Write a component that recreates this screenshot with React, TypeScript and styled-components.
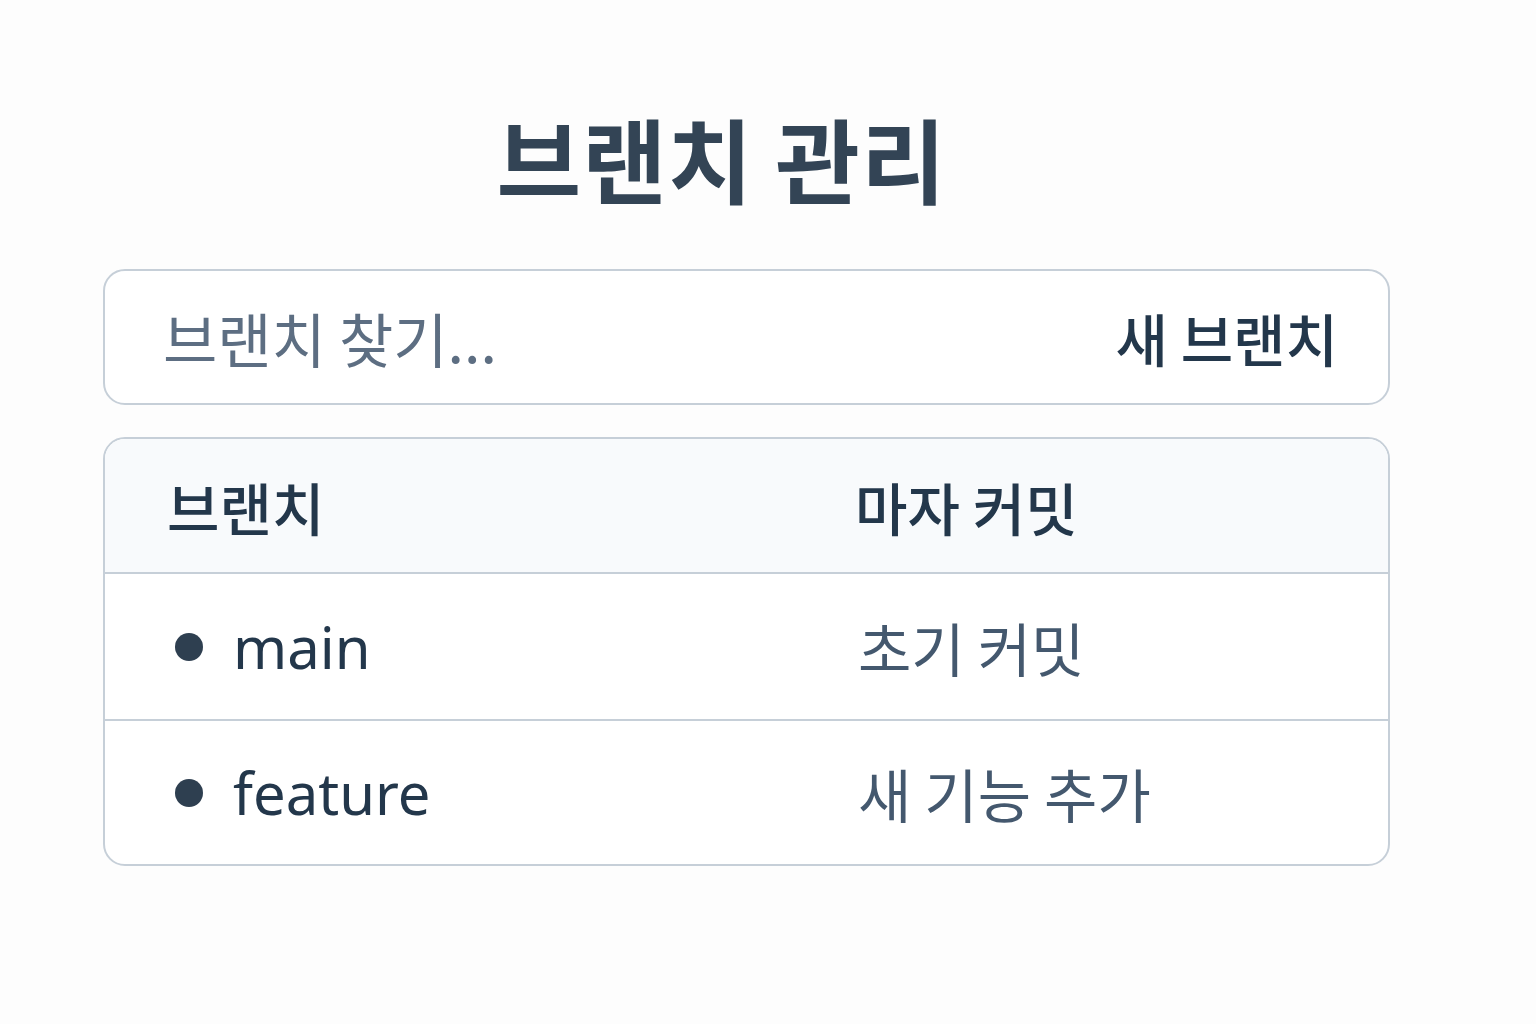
import React from "react";
import styled, { createGlobalStyle } from "styled-components";

interface Branch {
  name: string;
  lastCommit: string;
}

const BRANCHES: Branch[] = [
  { name: "main", lastCommit: "초기 커밋" },
  { name: "feature", lastCommit: "새 기능 추가" },
];

const GlobalStyle = createGlobalStyle`
  html, body {
    margin: 0;
    padding: 0;
    background: #fdfdfd;
  }
  body {
    font-family: "Noto Sans", "Noto Sans CJK KR", sans-serif;
    color: #2c3e50;
  }
`;

const App: React.FC = () => {
  return (
    <>
      <GlobalStyle />
      <SPage>
        <STitle>브랜치 관리</STitle>
        <SSearchBar>
          <SSearchInput placeholder="브랜치 찾기..." />
          <SNewButton type="button">새 브랜치</SNewButton>
        </SSearchBar>
        <STable>
          <SHeaderRow>
            <SHeaderCell>브랜치</SHeaderCell>
            <SHeaderCell>마자 커밋</SHeaderCell>
          </SHeaderRow>
          {BRANCHES.map((branch) => (
            <SRow key={branch.name}>
              <SBranchName>
                <SDot />
                {branch.name}
              </SBranchName>
              <SCommit>{branch.lastCommit}</SCommit>
            </SRow>
          ))}
        </STable>
      </SPage>
    </>
  );
};

const SPage = styled.div`
  width: 1287px;
  margin-left: 103px;
  padding-top: 99px;
  display: flex;
  flex-direction: column;
  gap: 32px;
`;

const STitle = styled.h1`
  margin: 0 0 22px;
  padding-right: 50px;
  text-align: center;
  font-family: "Noto Sans CJK KR", sans-serif;
  font-size: 92px;
  font-weight: 700;
  line-height: 116px;
  color: #334455;
  letter-spacing: 1px;
`;

const SSearchBar = styled.div`
  height: 136px;
  box-sizing: border-box;
  border: 2px solid #c6cfd8;
  border-radius: 22px;
  background: #ffffff;
  display: flex;
  align-items: center;
  justify-content: space-between;
  padding: 0 50px 0 56px;
`;

const SSearchInput = styled.input`
  flex: 1;
  border: none;
  outline: none;
  background: transparent;
  font-family: "Noto Sans CJK KR", sans-serif;
  font-size: 59px;
  font-weight: 400;
  color: #2c3e50;

  &::placeholder {
    color: #5d6e82;
  }
`;

const SNewButton = styled.button`
  border: none;
  background: transparent;
  padding: 0;
  font-family: "Noto Sans CJK KR", sans-serif;
  font-size: 57px;
  font-weight: 500;
  color: #23374b;
  cursor: pointer;
`;

const STable = styled.div`
  border: 2px solid #c6cfd8;
  border-radius: 22px;
  overflow: hidden;
  background: #ffffff;
`;

const SRowBase = styled.div`
  display: grid;
  grid-template-columns: 688px 1fr;
  align-items: center;
  box-sizing: border-box;
`;

const SHeaderRow = styled(SRowBase)`
  height: 135px;
  padding: 0 64px 0 62px;
  background: #f8fafc;
  border-bottom: 2px solid #c6cfd8;
`;

const SHeaderCell = styled.div`
  font-family: "Noto Sans CJK KR", sans-serif;
  font-size: 57px;
  font-weight: 500;
  color: #23374b;
`;

const SRow = styled(SRowBase)`
  height: 145px;
  padding: 0 64px 0 70px;

  & + & {
    border-top: 2px solid #c6cfd8;
  }
`;

const SBranchName = styled.div`
  display: flex;
  align-items: center;
  gap: 30px;
  font-family: "Noto Sans", sans-serif;
  font-size: 58px;
  color: #23374b;
`;

const SDot = styled.span`
  width: 28px;
  height: 28px;
  border-radius: 50%;
  background: #2e3f50;
  flex-shrink: 0;
`;

const SCommit = styled.div`
  margin-left: -5px;
  font-family: "Noto Sans CJK KR", sans-serif;
  font-size: 58px;
  color: #44586e;
`;

export default App;
